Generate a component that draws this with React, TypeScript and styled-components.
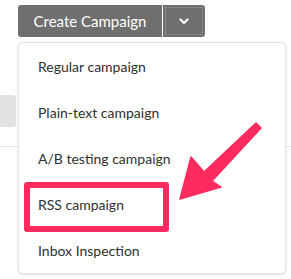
import React from "react";
import styled, { createGlobalStyle } from "styled-components";

const Global = createGlobalStyle`
  html, body { margin: 0; padding: 0; background: #ffffff; }
  body { font-family: Lato, "Open Sans", sans-serif; }
`;

const Page = styled.div`
  position: relative;
  width: 291px;
  height: 279px;
  overflow: hidden;
  background: #ffffff;
`;

const Toolbar = styled.div`
  display: flex;
  padding: 5px 0 0 18px;
  gap: 1px;
`;

const MainButton = styled.button`
  width: 144px;
  height: 32px;
  border: 0;
  border-radius: 3px 0 0 3px;
  background: #6f6f6f;
  color: #ffffff;
  font-family: Lato, sans-serif;
  font-size: 15px;
  padding: 0;
`;

const ToggleButton = styled.button`
  width: 42px;
  height: 32px;
  border: 0;
  border-radius: 0 3px 3px 0;
  background: #6f6f6f;
  display: flex;
  align-items: center;
  justify-content: center;
  padding: 0;
  outline: 1px dotted #9a9a9a;
  outline-offset: -3px;
`;

const Behind = styled.div`
  display: flex;
  flex-direction: column;
  padding-top: 58px;
`;

const FilterStub = styled.div`
  width: 16px;
  height: 32px;
  background: #e2e2e2;
  border-radius: 0 3px 3px 0;
`;

const Divider = styled.div`
  margin-top: 19px;
  height: 1px;
  background: #e4e4e4;
`;

const Menu = styled.ul`
  position: absolute;
  left: 18px;
  top: 42px;
  width: 266px;
  margin: 0;
  padding: 0;
  list-style: none;
  background: #ffffff;
  border: 1px solid #e3e3e3;
  border-radius: 5px;
  box-shadow: 0 1px 3px rgba(0, 0, 0, 0.12);
`;

const Item = styled.li`
  height: 46px;
  display: flex;
  align-items: center;
  padding-left: 19px;
  font-family: Lato, sans-serif;
  font-size: 14px;
  color: #303030;
`;

const Highlight = styled.div`
  position: absolute;
  left: 24px;
  top: 182px;
  width: 133px;
  height: 38px;
  border: 6.5px solid #fd2b5e;
  border-radius: 3px;
`;

const ArrowSvg = styled.svg`
  position: absolute;
  left: 170px;
  top: 115px;
  width: 100px;
  height: 90px;
`;

const items = [
  "Regular campaign",
  "Plain-text campaign",
  "A/B testing campaign",
  "RSS campaign",
  "Inbox Inspection",
];

export default function App() {
  return (
    <Page>
      <Global />
      <Toolbar>
        <MainButton>Create Campaign</MainButton>
        <ToggleButton aria-label="More">
          <svg width="10" height="7" viewBox="0 0 10 7">
            <path d="M1.5 1.5 L5 5 L8.5 1.5" fill="none" stroke="#ffffff" strokeWidth="2.2" strokeLinecap="round" strokeLinejoin="round" />
          </svg>
        </ToggleButton>
      </Toolbar>
      <Behind>
        <FilterStub />
        <Divider />
      </Behind>
      <Menu>
        {items.map((t) => (
          <Item key={t}>{t}</Item>
        ))}
      </Menu>
      <Highlight />
      <ArrowSvg viewBox="170 115 100 90">
        <polygon
          points="180,199 191,157 204,172 256,123 261,128 212,181 221,187"
          fill="#fd2b5e"
          stroke="#fd2b5e"
          strokeWidth="1.5"
          strokeLinejoin="round"
        />
      </ArrowSvg>
    </Page>
  );
}
